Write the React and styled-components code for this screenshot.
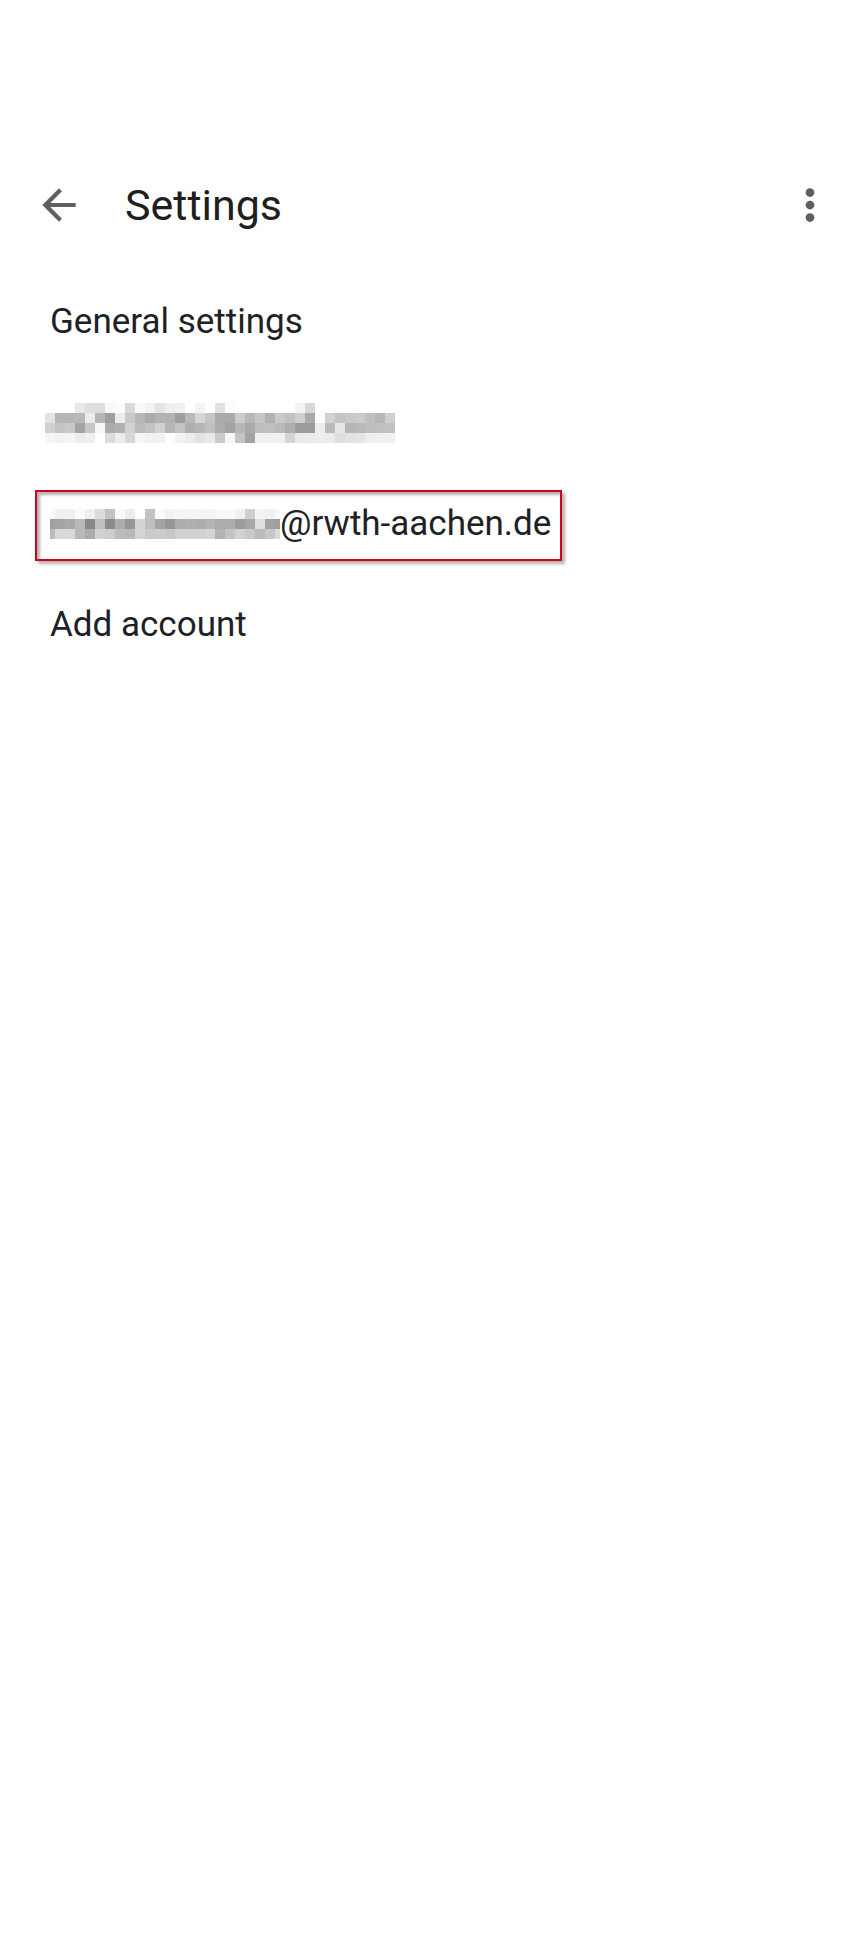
import React from "react";
import styled, { createGlobalStyle } from "styled-components";

const textColor = "#202124";
const iconColor = "#5f5f5f";
const markColor = "#d0021f";

const GlobalStyle = createGlobalStyle`
  body {
    margin: 0;
    background: #fff;
    color: ${textColor};
    font-family: Roboto, "Liberation Sans", sans-serif;
  }

  button {
    padding: 0;
    border: 0;
    background: none;
    color: inherit;
    font: inherit;
    text-align: left;
    cursor: pointer;
  }
`;

const Screen = styled.main`
  min-height: 100vh;
  padding-top: 154px;
  box-sizing: border-box;
`;

const Header = styled.header`
  display: flex;
  align-items: center;
  height: 102px;
  padding: 0 29px 0 34px;
`;

const IconButton = styled.button`
  display: flex;
  flex: none;

  svg {
    width: 50px;
    height: 50px;
    fill: ${iconColor};
  }
`;

const Title = styled.h1`
  flex: 1;
  margin: 0 0 0 41px;
  color: #1f1f1f;
  font-size: 43px;
  font-weight: 400;
  line-height: 50px;
`;

const List = styled.ul`
  margin: 16px 0 0;
  padding: 0;
  list-style: none;
`;

const Item = styled.li`
  display: flex;
  align-items: flex-start;
  height: 101px;
  box-sizing: border-box;
  padding: ${({ $top }) => $top || 30}px 0 0 ${({ $inset }) => $inset || 50}px;
`;

const ItemButton = styled.button`
  display: flex;
  align-items: center;
  font-size: 35px;
  line-height: 40px;
  white-space: nowrap;
`;

const MarkedButton = styled(ItemButton)`
  padding: 12px 9px 15px 13px;
  border: 2px solid ${markColor};
  box-shadow: 3px 3px 3px rgba(0, 0, 0, 0.3),
    inset 3px 3px 3px rgba(0, 0, 0, 0.3);
`;

const Mosaic = styled.svg`
  display: block;
  flex: none;
`;

// one gray level (hex pair) per 10px block
const gmailBlocks = [
  "ff ff ff e8 de de f8 fb d9 f9 f2 e4 ee f1 ff f4 fe e1 fc ff ff ff ff ff ff f4 d8 fe ff ff ff ff ff ff ff",
  "e3 b5 b5 b8 ec b6 9f ec c8 b7 ab b4 b2 9e b9 d5 c5 aa aa cc b8 c6 b2 ca c2 cf aa fe d1 c4 c8 cb c0 b6 d0",
  "d0 c4 c8 a4 c7 f7 ac b1 d2 bb c2 d1 b6 c3 ae b4 bf ac a3 b6 aa bd c0 ba ae 9b 9b ed bb e6 b6 b9 bd c0 c1",
  "f5 f2 f4 ec f0 fe dc ed d8 f6 f1 f1 ff f2 ec e2 e8 ca f6 c4 a2 f0 f0 f0 d3 ea eb ed eb df e2 e5 ef f0 f0",
];

const rwthBlocks = [
  "f9 f0 f0 fc f0 dc c3 f9 ed fe c3 fb f2 f5 f4 f5 f5 f9 f9 f1 d0 f3 f1 f9",
  "9f a5 a9 b8 88 bf 8b ad 96 d3 bf a3 96 ac b0 ad b4 ac ad 9d a7 df a2 9d",
  "bb d9 d9 b9 ab d2 cc bb b8 d5 ca cc c8 d1 d1 d1 d4 b4 c3 d2 c9 bb c8 dc",
];

// shift cuts the first column, width cuts the last one
const Pixelated = ({ blocks, width, shift = 0, label }) => (
  <Mosaic
    width={width}
    height={blocks.length * 10}
    viewBox={`${shift} 0 ${width} ${blocks.length * 10}`}
    shapeRendering="crispEdges"
    role="img"
    aria-label={label}
  >
    {blocks.map((row, y) =>
      row.split(" ").map((tone, x) => (
        <rect
          key={`${x}-${y}`}
          x={x * 10}
          y={y * 10}
          width="10"
          height="10"
          fill={`#${tone}${tone}${tone}`}
        />
      ))
    )}
  </Mosaic>
);

const App = () => {
  return (
    <>
      <GlobalStyle />
      <Screen>
        <Header>
          <IconButton type="button" aria-label="Back">
            <svg viewBox="0 0 24 24">
              <path d="M20 11H7.83l5.59-5.59L12 4l-8 8 8 8 1.41-1.41L7.83 13H20z" />
            </svg>
          </IconButton>
          <Title>Settings</Title>
          <IconButton type="button" aria-label="More options">
            <svg viewBox="0 0 24 24">
              <circle cx="12" cy="6" r="2.1" />
              <circle cx="12" cy="12" r="2.1" />
              <circle cx="12" cy="18" r="2.1" />
            </svg>
          </IconButton>
        </Header>
        <List>
          <Item>
            <ItemButton type="button">General settings</ItemButton>
          </Item>
          <Item $inset={45}>
            <ItemButton type="button">
              <Pixelated blocks={gmailBlocks} width={350} label="Account" />
            </ItemButton>
          </Item>
          <Item $inset={35} $top={16}>
            <MarkedButton type="button">
              <Pixelated blocks={rwthBlocks} width={230} shift={5} label="Account" />
              @rwth-aachen.de
            </MarkedButton>
          </Item>
          <Item>
            <ItemButton type="button">Add account</ItemButton>
          </Item>
        </List>
      </Screen>
    </>
  );
};

export default App;
